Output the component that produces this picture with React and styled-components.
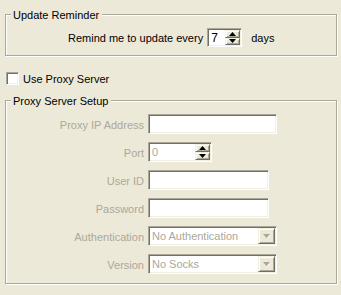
import React from 'react'
import styled, { createGlobalStyle } from 'styled-components'

const color = {
  face: '#ECE9D8',
  shadow: '#ACA899',
  darkShadow: '#716F64',
  light: '#F1EFE2',
  white: '#FFFFFF',
  text: '#000000',
  disabled: '#ACA899'
}

const GlobalStyle = createGlobalStyle`
  html, body {
    margin: 0;
    padding: 0;
    background: ${color.face};
  }
  body {
    font-family: "Liberation Sans", Arial, sans-serif;
    font-size: 11px;
    color: ${color.text};
  }
`

const Page = styled.div`
  width: 341px;
  height: 295px;
  padding: 6px 4px 0 5px;
  box-sizing: border-box;
  display: flex;
  flex-direction: column;
`

const GroupBox = styled.fieldset`
  margin: ${props => props.top}px 0 0 0;
  padding: ${props => props.padTop}px 0 ${props => props.padBottom}px 0;
  min-width: 0;
  border: 1px solid ${color.shadow};
  box-shadow: inset 1px 1px 0 ${color.white}, 1px 1px 0 ${color.white};
`

const Legend = styled.legend`
  margin-left: 5px;
  padding: 3px 3px 0 2px;
  line-height: 13px;
  background: ${color.face};
  color: ${color.text};
`

const ReminderRow = styled.div`
  display: flex;
  align-items: center;
  height: 19px;
  padding-left: 62px;
  line-height: 13px;
`

const RowText = styled.span`
  padding-top: 2px;
  margin-right: ${props => props.gap || 0}px;
  margin-left: ${props => props.lead || 0}px;
`

const Sunken = styled.div`
  box-sizing: border-box;
  display: flex;
  align-items: center;
  width: ${props => props.width}px;
  height: ${props => props.height || 20}px;
  background: ${color.white};
  border: 1px solid;
  border-color: ${color.shadow} ${color.white} ${color.white} ${color.shadow};
  box-shadow: inset 1px 1px 0 ${color.darkShadow}, inset -1px -1px 0 ${color.light};
  padding: 1px;
`

const FieldValue = styled.span`
  flex: 1;
  padding: 1px 0 0 2px;
  color: ${props => props.disabled ? color.disabled : color.text};
  font-size: ${props => props.big ? 12 : 11}px;
  line-height: 13px;
  white-space: nowrap;
  overflow: hidden;
`

const SpinStack = styled.div`
  display: flex;
  flex-direction: column;
  width: 15px;
  height: 100%;
`

const RaisedButton = styled.div`
  box-sizing: border-box;
  flex: 1;
  width: ${props => props.width ? props.width + 'px' : 'auto'};
  height: ${props => props.height ? props.height + 'px' : 'auto'};
  display: flex;
  align-items: center;
  justify-content: center;
  background: ${color.face};
  border: 1px solid;
  border-color: ${color.light} ${color.darkShadow} ${color.darkShadow} ${color.light};
  box-shadow: inset 1px 1px 0 ${color.white}, inset -1px -1px 0 ${color.shadow};
`

const CheckRow = styled.label`
  display: flex;
  align-items: center;
  margin-top: 16px;
  margin-left: 1px;
  height: 13px;
  line-height: 13px;
`

const CheckBox = styled.span`
  box-sizing: border-box;
  width: 13px;
  height: 13px;
  background: ${color.white};
  border: 1px solid;
  border-color: ${color.shadow} ${color.white} ${color.white} ${color.shadow};
  box-shadow: inset 1px 1px 0 ${color.darkShadow}, inset -1px -1px 0 ${color.light};
  margin-right: 4px;
`

const FormGrid = styled.div`
  display: grid;
  grid-template-columns: 138px auto;
  column-gap: 4px;
  row-gap: 8px;
  align-items: center;
`

const FieldLabel = styled.span`
  text-align: right;
  color: ${color.disabled};
  line-height: 13px;
  padding-top: 2px;
`

function Arrow ({ up, fill }) {
  return (
    <svg width='7' height='4' viewBox='0 0 7 4'>
      <polygon points={up ? '3.5,0 7,4 0,4' : '0,0 7,0 3.5,4'} fill={fill} />
    </svg>
  )
}

function SpinBox ({ value, width, height, disabled }) {
  return (
    <Sunken width={width} height={height}>
      <FieldValue big={!disabled} disabled={disabled}>{value}</FieldValue>
      <SpinStack>
        <RaisedButton><Arrow up fill={color.text} /></RaisedButton>
        <RaisedButton><Arrow fill={color.text} /></RaisedButton>
      </SpinStack>
    </Sunken>
  )
}

function ComboBox ({ value, width }) {
  return (
    <Sunken width={width}>
      <FieldValue disabled>{value}</FieldValue>
      <RaisedButton width={17} height={16} style={{ flex: 'none' }}>
        <svg width='7' height='5' viewBox='0 0 7 5'>
          <polygon points='0,0 7,0 3.5,4' fill={color.disabled} />
          <polygon points='4,4 7,1 7,2 4.5,4.5' fill={color.white} />
        </svg>
      </RaisedButton>
    </Sunken>
  )
}

export default function App () {
  return (
    <Page>
      <GlobalStyle />
      <GroupBox top={0} padTop={6} padBottom={8}>
        <Legend>Update Reminder</Legend>
        <ReminderRow>
          <RowText gap={4}>Remind me to update every</RowText>
          <SpinBox value='7' width={35} height={19} />
          <RowText lead={9}>days</RowText>
        </ReminderRow>
      </GroupBox>

      <CheckRow>
        <CheckBox />
        <RowText>Use Proxy Server</RowText>
      </CheckRow>

      <GroupBox top={7} padTop={6} padBottom={9}>
        <Legend>Proxy Server Setup</Legend>
        <FormGrid>
          <FieldLabel>Proxy IP Address</FieldLabel>
          <Sunken width={129} />
          <FieldLabel>Port</FieldLabel>
          <SpinBox value='0' width={64} disabled />
          <FieldLabel>User ID</FieldLabel>
          <Sunken width={121} />
          <FieldLabel>Password</FieldLabel>
          <Sunken width={121} />
          <FieldLabel>Authentication</FieldLabel>
          <ComboBox value='No Authentication' width={129} />
          <FieldLabel>Version</FieldLabel>
          <ComboBox value='No Socks' width={129} />
        </FormGrid>
      </GroupBox>
    </Page>
  )
}
